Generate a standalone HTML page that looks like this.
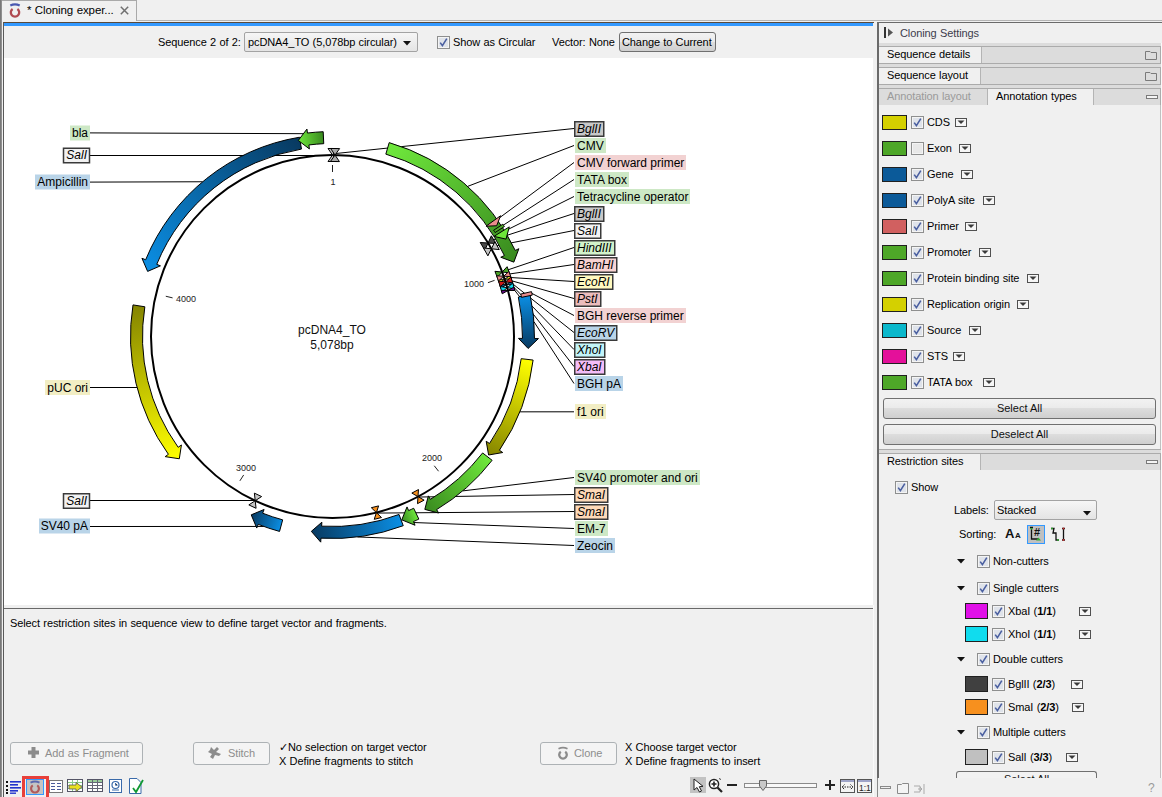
<!DOCTYPE html><html><head><meta charset="utf-8"><style>
html,body{margin:0;padding:0;width:1162px;height:797px;overflow:hidden;background:#f0f0f0}
.t{position:absolute;font-family:"Liberation Sans",sans-serif;font-size:11px;line-height:13px;color:#000;white-space:nowrap;letter-spacing:-0.1px;word-spacing:0.4px}
.tt{font-family:"Liberation Sans",sans-serif;font-size:11px;line-height:13px;color:#111;white-space:nowrap}
svg text{font-family:"Liberation Sans",sans-serif}
div>svg{display:block}
svg{overflow:visible}
</style></head><body>
<div style="position:absolute;left:0px;top:0px;width:1162px;height:797px;background:#f0f0f0"></div>
<div style="position:absolute;left:0px;top:0px;width:2px;height:797px;background:linear-gradient(90deg,#6e6e6e,#9a9a9a)"></div>
<div style="position:absolute;left:137px;top:20px;width:1025px;height:1px;background:#b4b4b4"></div>
<div style="position:absolute;left:2px;top:0px;width:135px;height:21px;background:#f0f0f0;border-top:1px solid #a9a9a9;border-right:1px solid #a9a9a9;box-sizing:border-box"></div>
<svg style="position:absolute;left:0px;top:0px" width="25" height="20"><path d="M10.3 5.6 Q15 3.2 19.7 5.6" stroke="#4a58b0" stroke-width="2.2" fill="none"/><path d="M17.41 8.96 A4.2 4.2 0 1 1 12.59 8.96" stroke="#b04a50" stroke-width="2.3" fill="none"/></svg>
<div class="t" style="left:27px;top:4px;font-size:11.5px">* Cloning exper...</div>
<svg style="position:absolute;left:120px;top:6px" width="9" height="9" viewBox="0 0 9 9"><path d="M0.8 0.8 L8.2 8.2 M8.2 0.8 L0.8 8.2" stroke="#707070" stroke-width="1.5"/></svg>
<div style="position:absolute;left:3px;top:22px;width:871px;height:775px;background:#f0f0f0;border-left:1px solid #5a5a5a;border-top:1px solid #5a4a3a;box-sizing:border-box"></div>
<div style="position:absolute;left:4px;top:23px;width:869px;height:3px;background:#3399ff"></div>
<div class="t" style="left:158px;top:36px;">Sequence 2 of 2:</div>
<div style="position:absolute;left:244px;top:32px;width:174px;height:20px;box-sizing:border-box;border:1px solid #a3a3a3;background:linear-gradient(#f6f6f6,#e4e4e4);border-radius:2px"></div>
<div class="t" style="left:248px;top:36px;">pcDNA4_TO (5,078bp circular)</div>
<svg style="position:absolute;left:403px;top:41px" width="8" height="5"><path d="M0 0 L8 0 L4 4.5Z" fill="#111"/></svg>
<div style="position:absolute;left:437px;top:36px"><svg width="13" height="13" viewBox="0 0 13 13"><rect x="0.5" y="0.5" width="12" height="12" fill="#f4f4f4" stroke="#8e8f8f"/><rect x="2" y="2" width="9" height="9" fill="#dfe3ea"/><path d="M3.2 6.6 L5.4 9.6 L9.8 2.6" fill="none" stroke="#4a5fa0" stroke-width="1.6"/></svg></div>
<div class="t" style="left:453px;top:36px;">Show as Circular</div>
<div class="t" style="left:552px;top:36px;">Vector: None</div>
<div style="position:absolute;left:619px;top:32px;width:97px;height:20px;box-sizing:border-box;border:1px solid #707070;background:linear-gradient(#f2f2f2 0,#ebebeb 50%,#dddddd 51%,#cfcfcf 100%);border-radius:3px"></div>
<div class="t" style="left:622px;top:36px;">Change to Current</div>
<div style="position:absolute;left:4px;top:58px;width:869px;height:547px;background:#ffffff"></div>
<svg style="position:absolute;left:0;top:0" width="874" height="605" viewBox="0 0 874 605"><defs><linearGradient id="g1" gradientUnits="userSpaceOnUse" x1="387.5" y1="148.4" x2="513.8" y2="262.1"><stop offset="0" stop-color="#6fe83c"/><stop offset="1" stop-color="#398a1f"/></linearGradient><linearGradient id="g2" gradientUnits="userSpaceOnUse" x1="147.6" y1="271.4" x2="300.5" y2="143.1"><stop offset="0" stop-color="#0b8ee3"/><stop offset="1" stop-color="#083a61"/></linearGradient><linearGradient id="g3" gradientUnits="userSpaceOnUse" x1="298.3" y1="140.5" x2="323.5" y2="137.7"><stop offset="0" stop-color="#6fe83c"/><stop offset="1" stop-color="#398a1f"/></linearGradient><linearGradient id="g4" gradientUnits="userSpaceOnUse" x1="179.3" y1="458.8" x2="138.9" y2="305.8"><stop offset="0" stop-color="#ffff00"/><stop offset="1" stop-color="#858500"/></linearGradient><linearGradient id="g5" gradientUnits="userSpaceOnUse" x1="524.2" y1="295.7" x2="528.1" y2="348.5"><stop offset="0" stop-color="#0b8ee3"/><stop offset="1" stop-color="#083a61"/></linearGradient><linearGradient id="g6" gradientUnits="userSpaceOnUse" x1="527.2" y1="359.4" x2="488.6" y2="455.0"><stop offset="0" stop-color="#ffff00"/><stop offset="1" stop-color="#858500"/></linearGradient><linearGradient id="g7" gradientUnits="userSpaceOnUse" x1="487.4" y1="456.6" x2="424.8" y2="509.4"><stop offset="0" stop-color="#6fe83c"/><stop offset="1" stop-color="#398a1f"/></linearGradient><linearGradient id="g8" gradientUnits="userSpaceOnUse" x1="401.1" y1="520.1" x2="311.3" y2="531.4"><stop offset="0" stop-color="#0b8ee3"/><stop offset="1" stop-color="#083a61"/></linearGradient><linearGradient id="g9" gradientUnits="userSpaceOnUse" x1="416.3" y1="513.7" x2="401.8" y2="519.8"><stop offset="0" stop-color="#6fe83c"/><stop offset="1" stop-color="#398a1f"/></linearGradient><linearGradient id="g10" gradientUnits="userSpaceOnUse" x1="281.1" y1="525.6" x2="251.2" y2="514.9"><stop offset="0" stop-color="#0b8ee3"/><stop offset="1" stop-color="#083a61"/></linearGradient></defs><circle cx="332.5" cy="336.5" r="181.5" fill="none" stroke="#000" stroke-width="2"/><line x1="332.50" y1="172.00" x2="332.50" y2="165.00" stroke="#222" stroke-width="1"/><line x1="487.94" y1="282.66" x2="494.55" y2="280.37" stroke="#222" stroke-width="1"/><line x1="434.26" y1="465.75" x2="438.59" y2="471.25" stroke="#222" stroke-width="1"/><line x1="243.67" y1="474.96" x2="239.89" y2="480.85" stroke="#222" stroke-width="1"/><line x1="172.60" y1="297.89" x2="165.79" y2="296.24" stroke="#222" stroke-width="1"/><g font-size="9" fill="#222"><text x="333" y="185" text-anchor="middle">1</text><text x="484" y="287" text-anchor="end">1000</text><text x="432" y="460.5" text-anchor="middle">2000</text><text x="246" y="470.5" text-anchor="middle">3000</text><text x="176" y="301.5">4000</text></g><g font-size="12" fill="#111" text-anchor="middle"><text x="332" y="333.5">pcDNA4_TO</text><text x="332" y="348.5">5,078bp</text></g><line x1="574.00" y1="128.50" x2="335.69" y2="153.53" stroke="#000" stroke-width="1"/><line x1="574.00" y1="145.50" x2="467.66" y2="186.38" stroke="#000" stroke-width="1"/><line x1="574.00" y1="162.50" x2="498.79" y2="218.33" stroke="#000" stroke-width="1"/><line x1="574.00" y1="179.50" x2="502.56" y2="225.64" stroke="#000" stroke-width="1"/><line x1="574.00" y1="196.50" x2="507.48" y2="229.69" stroke="#000" stroke-width="1"/><line x1="574.00" y1="213.50" x2="493.65" y2="239.67" stroke="#000" stroke-width="1"/><line x1="574.00" y1="230.50" x2="497.09" y2="245.64" stroke="#000" stroke-width="1"/><line x1="574.00" y1="247.50" x2="507.31" y2="270.09" stroke="#000" stroke-width="1"/><line x1="574.00" y1="264.50" x2="508.77" y2="274.08" stroke="#000" stroke-width="1"/><line x1="574.00" y1="281.50" x2="509.94" y2="277.47" stroke="#000" stroke-width="1"/><line x1="574.00" y1="298.50" x2="510.94" y2="280.58" stroke="#000" stroke-width="1"/><line x1="574.00" y1="315.50" x2="531.89" y2="293.39" stroke="#000" stroke-width="1"/><line x1="574.00" y1="332.50" x2="511.71" y2="283.08" stroke="#000" stroke-width="1"/><line x1="574.00" y1="349.50" x2="512.52" y2="285.90" stroke="#000" stroke-width="1"/><line x1="574.00" y1="366.50" x2="513.21" y2="288.42" stroke="#000" stroke-width="1"/><line x1="574.00" y1="383.50" x2="533.96" y2="321.71" stroke="#000" stroke-width="1"/><line x1="574.00" y1="411.80" x2="519.92" y2="411.84" stroke="#000" stroke-width="1"/><line x1="574.00" y1="477.50" x2="462.75" y2="490.90" stroke="#000" stroke-width="1"/><line x1="574.00" y1="494.50" x2="418.22" y2="497.05" stroke="#000" stroke-width="1"/><line x1="574.00" y1="511.50" x2="376.53" y2="513.09" stroke="#000" stroke-width="1"/><line x1="574.00" y1="528.50" x2="411.43" y2="522.44" stroke="#000" stroke-width="1"/><line x1="574.00" y1="545.50" x2="357.47" y2="536.95" stroke="#000" stroke-width="1"/><line x1="90.00" y1="132.90" x2="310.29" y2="133.71" stroke="#000" stroke-width="1"/><line x1="90.00" y1="155.50" x2="333.00" y2="155.50" stroke="#000" stroke-width="1"/><line x1="90.00" y1="182.10" x2="202.66" y2="181.76" stroke="#000" stroke-width="1"/><line x1="90.00" y1="387.50" x2="137.20" y2="387.50" stroke="#000" stroke-width="1"/><line x1="90.00" y1="500.50" x2="255.50" y2="500.50" stroke="#000" stroke-width="1"/><line x1="90.00" y1="526.50" x2="263.74" y2="526.44" stroke="#000" stroke-width="1"/><path d="M389.19 142.62 A202 202 0 0 1 515.24 250.42 L518.86 248.71 L513.84 262.13 L500.77 257.24 L504.38 255.53 A190 190 0 0 0 385.83 154.14 Z" fill="url(#g1)" stroke="#000" stroke-width="1" stroke-linejoin="miter"/><path d="M299.51 137.21 A202 202 0 0 0 145.64 259.77 L141.94 258.25 L147.63 271.40 L160.44 265.85 L156.74 264.33 A190 190 0 0 1 301.47 149.05 Z" fill="url(#g2)" stroke="#000" stroke-width="1" stroke-linejoin="miter"/><path d="M323.20 131.71 A205 205 0 0 0 307.44 133.04 L306.95 129.07 L298.29 140.46 L309.40 148.92 L308.91 144.95 A193 193 0 0 1 323.74 143.70 Z" fill="url(#g3)" stroke="#000" stroke-width="1" stroke-linejoin="miter"/><path d="M132.99 304.90 A202 202 0 0 0 168.41 454.31 L165.16 456.64 L179.32 458.78 L181.41 444.98 L178.16 447.31 A190 190 0 0 1 144.84 306.78 Z" fill="url(#g4)" stroke="#000" stroke-width="1" stroke-linejoin="miter"/><path d="M530.09 294.50 A202 202 0 0 1 534.49 338.53 L538.49 338.57 L528.13 348.47 L518.49 338.37 L522.49 338.41 A190 190 0 0 0 518.35 297.00 Z" fill="url(#g5)" stroke="#000" stroke-width="1" stroke-linejoin="miter"/><path d="M533.12 360.07 A202 202 0 0 1 499.42 450.26 L502.72 452.52 L488.62 455.00 L486.20 441.25 L489.50 443.51 A190 190 0 0 0 521.20 358.67 Z" fill="url(#g6)" stroke="#000" stroke-width="1" stroke-linejoin="miter"/><path d="M492.11 460.31 A202 202 0 0 1 436.61 509.61 L438.67 513.03 L424.82 509.40 L428.36 495.89 L430.42 499.32 A190 190 0 0 0 482.63 452.95 Z" fill="url(#g7)" stroke="#000" stroke-width="1" stroke-linejoin="miter"/><path d="M403.24 525.71 A202 202 0 0 1 320.95 538.17 L320.73 542.16 L311.33 531.35 L321.87 522.20 L321.64 526.19 A190 190 0 0 0 399.04 514.47 Z" fill="url(#g8)" stroke="#000" stroke-width="1" stroke-linejoin="miter"/><path d="M418.83 519.12 A202 202 0 0 1 413.45 521.57 L415.05 525.24 L401.78 519.85 L407.03 506.91 L408.64 510.58 A190 190 0 0 0 413.70 508.28 Z" fill="url(#g9)" stroke="#000" stroke-width="1" stroke-linejoin="miter"/><path d="M279.54 531.43 A202 202 0 0 1 258.22 524.35 L256.74 528.06 L251.22 514.85 L264.10 509.47 L262.63 513.19 A190 190 0 0 0 282.68 519.85 Z" fill="url(#g10)" stroke="#000" stroke-width="1" stroke-linejoin="miter"/><path d="M500.60 215.71 L496.65 225.78 L485.98 226.21Z" fill="#ea8c8c" stroke="#000" stroke-width="1"/><path d="M502.81 224.20 A204 204 0 0 1 504.36 226.59 L495.09 232.52 A193 193 0 0 0 493.63 230.26 Z" fill="#4ea728" stroke="#000" stroke-width="1" stroke-linejoin="miter"/><path d="M509.28 226.89 L506.04 239.11 L493.98 236.38Z" fill="#6ee53a" stroke="#000" stroke-width="1"/><path d="M531.51 291.65 A204 204 0 0 1 532.26 295.13 L521.49 297.36 A193 193 0 0 0 520.78 294.07 Z" fill="#e88c8c" stroke="#000" stroke-width="1" stroke-linejoin="miter"/><path d="M332.50 155.00 L337.00 148.50 L328.00 148.50Z M332.50 155.00 L337.00 161.50 L328.00 161.50Z" fill="#c4c4c4" stroke="#000" stroke-width="1" stroke-linejoin="miter"/><path d="M335.03 155.02 L339.62 148.58 L330.63 148.46Z M335.03 155.02 L339.44 161.58 L330.44 161.45Z" fill="#a8a8a8" stroke="#000" stroke-width="1" stroke-linejoin="miter"/><path d="M488.08 243.02 L495.97 243.53 L491.33 235.82Z M488.08 243.02 L484.82 250.23 L480.19 242.51Z" fill="#4a4a4a" stroke="#000" stroke-width="1" stroke-linejoin="miter"/><path d="M491.40 248.78 L499.26 249.58 L494.91 241.70Z M491.40 248.78 L487.88 255.87 L483.53 247.99Z" fill="#c4c4c4" stroke="#000" stroke-width="1" stroke-linejoin="miter"/><path d="M504.72 279.21 L511.52 279.06 L510.26 275.26Z M504.72 279.21 L499.18 283.16 L497.92 279.36Z" fill="#e8d820" stroke="#000" stroke-width="1" stroke-linejoin="miter"/><path d="M506.44 284.65 L513.24 284.71 L512.09 280.87Z M506.44 284.65 L500.78 288.42 L499.64 284.59Z" fill="#1060a0" stroke="#000" stroke-width="1" stroke-linejoin="miter"/><path d="M502.17 272.05 L509.40 272.78 L507.09 266.70Z M502.17 272.05 L497.25 277.39 L494.94 271.32Z" fill="#4ea728" stroke="#000" stroke-width="1" stroke-linejoin="miter"/><path d="M503.69 276.21 L510.74 276.65 L508.91 271.46Z M503.69 276.21 L498.48 280.97 L496.65 275.78Z" fill="#ee8a8a" stroke="#000" stroke-width="1" stroke-linejoin="miter"/><path d="M505.60 281.92 L512.70 282.83 L510.90 277.11Z M505.60 281.92 L500.30 286.74 L498.50 281.02Z" fill="#d01818" stroke="#000" stroke-width="1" stroke-linejoin="miter"/><path d="M507.31 287.69 L514.38 288.83 L512.77 283.05Z M507.31 287.69 L501.86 292.33 L500.25 286.55Z" fill="#10d8f0" stroke="#000" stroke-width="1" stroke-linejoin="miter"/><path d="M508.06 290.44 L514.79 290.49 L513.90 287.10Z M508.06 290.44 L502.22 293.79 L501.33 290.40Z" fill="#6a0a8a" stroke="#000" stroke-width="1" stroke-linejoin="miter"/><path d="M417.99 496.61 L417.51 503.67 L424.12 500.13Z M417.99 496.61 L411.85 493.08 L418.47 489.55Z" fill="#f7901e" stroke="#000" stroke-width="1" stroke-linejoin="miter"/><path d="M376.41 512.61 L374.22 519.34 L381.50 517.52Z M376.41 512.61 L371.32 507.69 L378.60 505.88Z" fill="#f7901e" stroke="#000" stroke-width="1" stroke-linejoin="miter"/><path d="M255.22 500.73 L248.83 504.90 L256.07 508.31Z M255.22 500.73 L254.37 493.14 L261.61 496.55Z" fill="#c4c4c4" stroke="#000" stroke-width="1" stroke-linejoin="miter"/><g font-size="12" fill="#000"><rect x="574.75" y="121.75" width="29" height="14.5" fill="#c8c8c8" stroke="#3a3a3a" stroke-width="1.5"/><text x="577" y="132.5" font-style="italic">BglII</text><rect x="575" y="138" width="31" height="15" fill="#cde8c5"/><text x="577" y="149.5">CMV</text><rect x="575" y="155" width="111" height="15" fill="#f2d2d2"/><text x="577" y="166.5">CMV forward primer</text><rect x="575" y="172" width="54" height="15" fill="#cde8c5"/><text x="577" y="183.5">TATA box</text><rect x="575" y="189" width="115" height="15" fill="#cde8c5"/><text x="577" y="200.5">Tetracycline operator</text><rect x="574.75" y="206.75" width="29" height="14.5" fill="#c8c8c8" stroke="#3a3a3a" stroke-width="1.5"/><text x="577" y="217.5" font-style="italic">BglII</text><rect x="574.75" y="223.75" width="26" height="14.5" fill="#f2f2f2" stroke="#3a3a3a" stroke-width="1.5"/><text x="577" y="234.5" font-style="italic">SalI</text><rect x="574.75" y="240.75" width="40" height="14.5" fill="#d2f2ca" stroke="#3a3a3a" stroke-width="1.5"/><text x="577" y="251.5" font-style="italic">HindIII</text><rect x="574.75" y="257.75" width="42" height="14.5" fill="#f8d2d2" stroke="#3a3a3a" stroke-width="1.5"/><text x="577" y="268.5" font-style="italic">BamHI</text><rect x="574.75" y="274.75" width="38" height="14.5" fill="#fffac0" stroke="#3a3a3a" stroke-width="1.5"/><text x="577" y="285.5" font-style="italic">EcoRI</text><rect x="574.75" y="291.75" width="26" height="14.5" fill="#ecbcbc" stroke="#3a3a3a" stroke-width="1.5"/><text x="577" y="302.5" font-style="italic">PstI</text><rect x="575" y="308" width="111" height="15" fill="#f2d2d2"/><text x="577" y="319.5">BGH reverse primer</text><rect x="574.75" y="325.75" width="42" height="14.5" fill="#b9d4e8" stroke="#3a3a3a" stroke-width="1.5"/><text x="577" y="336.5" font-style="italic">EcoRV</text><rect x="574.75" y="342.75" width="30" height="14.5" fill="#c2f4f8" stroke="#3a3a3a" stroke-width="1.5"/><text x="577" y="353.5" font-style="italic">XhoI</text><rect x="574.75" y="359.75" width="30" height="14.5" fill="#f4bcf8" stroke="#3a3a3a" stroke-width="1.5"/><text x="577" y="370.5" font-style="italic">XbaI</text><rect x="575" y="376" width="48" height="15" fill="#b9d4e8"/><text x="577" y="387.5">BGH pA</text><rect x="575" y="404" width="31" height="15" fill="#f2eec4"/><text x="577" y="415.5">f1 ori</text><rect x="575" y="470" width="125" height="15" fill="#cde8c5"/><text x="577" y="481.5">SV40 promoter and ori</text><rect x="574.75" y="487.75" width="33" height="14.5" fill="#fdd9b8" stroke="#3a3a3a" stroke-width="1.5"/><text x="577" y="498.5" font-style="italic">SmaI</text><rect x="574.75" y="504.75" width="33" height="14.5" fill="#fdd9b8" stroke="#3a3a3a" stroke-width="1.5"/><text x="577" y="515.5" font-style="italic">SmaI</text><rect x="575" y="521" width="33" height="15" fill="#cde8c5"/><text x="577" y="532.5">EM-7</text><rect x="575" y="538" width="40" height="15" fill="#b9d4e8"/><text x="577" y="549.5">Zeocin</text><rect x="70" y="125.5" width="20" height="15" fill="#cde8c5"/><text x="88" y="137.0" text-anchor="end">bla</text><rect x="63.5" y="148.25" width="26" height="14.5" fill="#f2f2f2" stroke="#3a3a3a" stroke-width="1.5"/><text x="87" y="159.0" text-anchor="end" font-style="italic">SalI</text><rect x="35" y="174.5" width="55" height="15" fill="#b9d4e8"/><text x="88" y="186.0" text-anchor="end">Ampicillin</text><rect x="45" y="380" width="45" height="15" fill="#f2eec4"/><text x="88" y="391.5" text-anchor="end">pUC ori</text><rect x="63.5" y="493.75" width="26" height="14.5" fill="#f2f2f2" stroke="#3a3a3a" stroke-width="1.5"/><text x="87" y="504.5" text-anchor="end" font-style="italic">SalI</text><rect x="39" y="518.5" width="51" height="15" fill="#b9d4e8"/><text x="88" y="530.0" text-anchor="end">SV40 pA</text></g></svg>
<div style="position:absolute;left:4px;top:605px;width:869px;height:3px;background:#f0f0f0"></div>
<div style="position:absolute;left:4px;top:608px;width:869px;height:1px;background:#696969"></div>
<div class="t" style="left:10px;top:617px;">Select restriction sites in sequence view to define target vector and fragments.</div>
<div style="position:absolute;left:10px;top:742px;width:133px;height:23px;box-sizing:border-box;border:1px solid #adb2b5;background:#f4f4f4;border-radius:3px"></div>
<svg style="position:absolute;left:28px;top:747px" width="11" height="11"><path d="M3.5 0 H7.5 V3.5 H11 V7.5 H7.5 V11 H3.5 V7.5 H0 V3.5 H3.5Z" fill="#8c8c8c"/></svg>
<div class="t" style="left:45px;top:747px;color:#8d8d8d">Add as Fragment</div>
<div style="position:absolute;left:193px;top:742px;width:77px;height:23px;box-sizing:border-box;border:1px solid #adb2b5;background:#f4f4f4;border-radius:3px"></div>
<svg style="position:absolute;left:207px;top:746px" width="16" height="14"><path d="M4 1 L7 4 L10 1 L12 3 L9 6 L14 8 L12 10 L8 9 L6 13 L3 11 L5 8 L1 6 L3 4Z" fill="#8c8c8c"/></svg>
<div class="t" style="left:228px;top:747px;color:#8d8d8d">Stitch</div>
<div class="t" style="left:279px;top:741px;">&#10003;No selection on target vector</div>
<div class="t" style="left:279px;top:755px;">X&nbsp;Define fragments to stitch</div>
<div style="position:absolute;left:540px;top:742px;width:77px;height:23px;box-sizing:border-box;border:1px solid #adb2b5;background:#f4f4f4;border-radius:3px"></div>
<svg style="position:absolute;left:555px;top:745px" width="16" height="16"><path d="M3.5 3.8 Q8 1.6 12.5 3.8" stroke="#8c8c8c" stroke-width="1.7" fill="none"/><path d="M10.18 6.69 A3.8 3.8 0 1 1 5.82 6.69" stroke="#8c8c8c" stroke-width="2.3" fill="none"/></svg>
<div class="t" style="left:574px;top:747px;color:#8d8d8d">Clone</div>
<div class="t" style="left:625px;top:741px;">X&nbsp;Choose target vector</div>
<div class="t" style="left:625px;top:755px;">X&nbsp;Define fragments to insert</div>
<div style="position:absolute;left:22px;top:776px;width:27px;height:24px;box-sizing:border-box;border:3px solid #e8403a"></div>
<div style="position:absolute;left:26px;top:779px;width:18px;height:16px;box-sizing:border-box;border:1px solid #3399ff;background:#c4c4c4"></div>
<svg style="position:absolute;left:6px;top:780px" width="16" height="14"><g fill="#111"><rect x="0" y="1" width="2" height="2"/><rect x="0" y="5" width="2" height="2"/><rect x="0" y="9" width="2" height="2"/><rect x="0" y="12" width="2" height="2"/></g><g fill="#2233cc"><rect x="4" y="1" width="11" height="1.6"/><rect x="4" y="4" width="8" height="1.6"/><rect x="4" y="7" width="11" height="1.6"/><rect x="4" y="10" width="8" height="1.6"/><rect x="4" y="12.5" width="6" height="1.4"/></g></svg>
<svg style="position:absolute;left:26px;top:779px" width="18" height="16"><path d="M4.5 3.6 Q9 1.4 13.5 3.6" stroke="#5a68b0" stroke-width="1.8" fill="none"/><path d="M11.24 6.41 A3.9 3.9 0 1 1 6.76 6.41" stroke="#b05a5a" stroke-width="2.2" fill="none"/></svg>
<svg style="position:absolute;left:49px;top:780px" width="14" height="13"><rect x="0.5" y="0.5" width="13" height="12" fill="#fff" stroke="#777"/><g stroke="#4a5a9a"><path d="M2 3.5H6M8 3.5H12M2 6.5H6M8 6.5H12M2 9.5H6M8 9.5H12"/></g></svg>
<svg style="position:absolute;left:67px;top:779px" width="17" height="15"><rect x="0.5" y="0.5" width="15" height="12" fill="#fff" stroke="#556"/><path d="M1 3.5H15M1 6.5H15M1 9.5H15M5.5 1V12M10.5 1V12" stroke="#8c8"/><path d="M2 6 H9 V3.5 L15 8 L9 12.5 V10 H2Z" fill="#e8e020" stroke="#555" stroke-width="0.8"/></svg>
<svg style="position:absolute;left:87px;top:779px" width="17" height="14"><rect x="0.5" y="0.5" width="15" height="12" fill="#fff" stroke="#556"/><rect x="1" y="1" width="14" height="2.5" fill="#9c9"/><path d="M1 3.5H15M1 6.5H15M1 9.5H15M5.5 1V12M10.5 1V12" stroke="#667"/></svg>
<svg style="position:absolute;left:109px;top:779px" width="13" height="14"><rect x="0.5" y="0.5" width="12" height="13" fill="#fff" stroke="#3a6aaa"/><circle cx="6.5" cy="6" r="3.5" fill="none" stroke="#3a6aaa" stroke-width="1.2"/><path d="M6.5 4V6.2H8.5M3 11H10" stroke="#3a6aaa"/></svg>
<svg style="position:absolute;left:129px;top:778px" width="15" height="16"><path d="M0.5 0.5H8L12 4.5V15.5H0.5Z" fill="#fff" stroke="#3a6aaa"/><path d="M4 10 L7 14 L14 2" fill="none" stroke="#119933" stroke-width="1.8"/></svg>
<div style="position:absolute;left:690px;top:777px;width:16px;height:16px;background:#c2c2c2"></div>
<svg style="position:absolute;left:693px;top:778px" width="12" height="15"><path d="M1 1 L1 12 L4 9.5 L6.5 14 L8.5 13 L6.3 8.7 L10 8.3Z" fill="#fff" stroke="#222" stroke-width="1"/></svg>
<svg style="position:absolute;left:708px;top:777px" width="16" height="16"><circle cx="6" cy="7" r="4.6" fill="#fff" stroke="#222" stroke-width="1.5"/><path d="M6 4.5V9.5M3.5 7H8.5" stroke="#222" stroke-width="1.6"/><path d="M9.5 10.5 L14 15" stroke="#222" stroke-width="2.2"/><path d="M11 1.5 L13 2.5" stroke="#444"/></svg>
<div style="position:absolute;left:727px;top:784px;width:10px;height:2px;background:#222"></div>
<div style="position:absolute;left:744px;top:783px;width:73px;height:5px;box-sizing:border-box;border:1px solid #8a8a8a;background:#f8f8f8"></div>
<svg style="position:absolute;left:759px;top:780px" width="8" height="11"><path d="M0.5 0.5H7.5V6L4 10.5L0.5 6Z" fill="#c8c8c8" stroke="#666"/></svg>
<div style="position:absolute;left:825px;top:784px;width:10px;height:2px;background:#222"></div>
<div style="position:absolute;left:829px;top:780px;width:2px;height:10px;background:#222"></div>
<svg style="position:absolute;left:840px;top:779px" width="16" height="14"><rect x="0.5" y="0.5" width="14" height="13" fill="#f4f4f4" stroke="#555"/><rect x="1" y="1" width="13" height="2" fill="#9ea4c8"/><path d="M2 8H13M4.5 5.5L2 8L4.5 10.5M10.5 5.5L13 8L10.5 10.5" stroke="#222" fill="none" stroke-dasharray="1.5 1"/></svg>
<svg style="position:absolute;left:857px;top:779px" width="16" height="14"><rect x="0.5" y="0.5" width="14" height="13" fill="#f4f4f4" stroke="#555"/><rect x="1" y="1" width="13" height="2" fill="#9ea4c8"/><text x="2" y="12" font-family="Liberation Sans" font-size="8.5" fill="#222">1:1</text></svg>
<div style="position:absolute;left:877px;top:22px;width:285px;height:756px;box-sizing:border-box;border-left:2px solid #6a6a6a;border-top:1px solid #6a6a6a;background:#f0f0f0"></div>
<div style="position:absolute;left:1160px;top:43px;width:1px;height:735px;background:#c0c0c0"></div>
<div style="position:absolute;left:1161px;top:43px;width:1px;height:735px;background:#fafafa"></div>
<svg style="position:absolute;left:884px;top:27px" width="10" height="12"><rect x="0" y="0" width="2" height="11" fill="#333"/><path d="M4 1.5 L9 5.5 L4 9.5Z" fill="#555"/></svg>
<div class="t" style="left:900px;top:27px;color:#3c3c4c">Cloning Settings</div>
<div style="position:absolute;left:879px;top:43px;width:282px;height:3px;background:#dcdcdc"></div>
<div style="position:absolute;left:879px;top:46px;width:282px;height:18px;background:#dcdcdc;border-top:1px solid #ababab;border-right:1px solid #ababab;border-bottom:1px solid #ababab;box-sizing:border-box"></div><div style="position:absolute;left:879px;top:47px;width:103px;height:16px;background:#f0f0f0;border-right:1px solid #b4b4b4;box-sizing:border-box"></div><div class="t" style="left:887px;top:48px;">Sequence details</div><svg style="position:absolute;left:1145px;top:50px" width="12" height="11"><path d="M0.5 1.5H5L6 2.5H11.5V9.5H0.5Z" fill="none" stroke="#7a7a7a"/></svg>
<div style="position:absolute;left:879px;top:64px;width:282px;height:3px;background:#dcdcdc"></div>
<div style="position:absolute;left:879px;top:67px;width:282px;height:18px;background:#dcdcdc;border-top:1px solid #ababab;border-right:1px solid #ababab;border-bottom:1px solid #ababab;box-sizing:border-box"></div><div style="position:absolute;left:879px;top:68px;width:102px;height:16px;background:#f0f0f0;border-right:1px solid #b4b4b4;box-sizing:border-box"></div><div class="t" style="left:887px;top:69px;">Sequence layout</div><svg style="position:absolute;left:1145px;top:71px" width="12" height="11"><path d="M0.5 1.5H5L6 2.5H11.5V9.5H0.5Z" fill="none" stroke="#7a7a7a"/></svg>
<div style="position:absolute;left:879px;top:85px;width:282px;height:3px;background:#dcdcdc"></div>
<div style="position:absolute;left:879px;top:88px;width:282px;height:17px;background:#dcdcdc;border-top:1px solid #ababab;border-right:1px solid #ababab;box-sizing:border-box"></div><div style="position:absolute;left:879px;top:89px;width:109px;height:16px;background:#dcdcdc;border-right:1px solid #b4b4b4;box-sizing:border-box"></div><div class="t" style="left:887px;top:90px;color:#9a9a9a">Annotation layout</div><div style="position:absolute;left:988px;top:89px;width:106px;height:16px;background:#f0f0f0;border-right:1px solid #b4b4b4;box-sizing:border-box"></div><div class="t" style="left:996px;top:90px;">Annotation types</div><svg style="position:absolute;left:1146px;top:95px" width="12" height="4"><rect x="0.5" y="0.5" width="11" height="3" fill="#f4f4f4" stroke="#7a7a7a"/></svg>
<div style="position:absolute;left:882px;top:115px;width:25px;height:15px;box-sizing:border-box;border:1px solid #202020;background:#d4d000"></div>
<div style="position:absolute;left:911px;top:116px;height:13px"><svg width="13" height="13" viewBox="0 0 13 13"><rect x="0.5" y="0.5" width="12" height="12" fill="#f4f4f4" stroke="#8e8f8f"/><rect x="2" y="2" width="9" height="9" fill="#dfe3ea"/><path d="M3.2 6.6 L5.4 9.6 L9.8 2.6" fill="none" stroke="#4a5fa0" stroke-width="1.6"/></svg></div>
<div class="t" style="left:927px;top:116px">CDS</div>
<div style="position:absolute;left:955px;top:118px"><svg width="12" height="9" viewBox="0 0 12 9"><rect x="0.5" y="0.5" width="11" height="8" fill="#f6f6f6" stroke="#505050"/><path d="M2.5 2.5 L9.5 2.5 L6 6Z" fill="#3a3a3a"/></svg></div>
<div style="position:absolute;left:882px;top:141px;width:25px;height:15px;box-sizing:border-box;border:1px solid #202020;background:#4ea728"></div>
<div style="position:absolute;left:911px;top:142px;height:13px"><svg width="13" height="13" viewBox="0 0 13 13"><rect x="0.5" y="0.5" width="12" height="12" fill="#f4f4f4" stroke="#8e8f8f"/><rect x="2" y="2" width="9" height="9" fill="#e8e8e8"/></svg></div>
<div class="t" style="left:927px;top:142px">Exon</div>
<div style="position:absolute;left:959px;top:144px"><svg width="12" height="9" viewBox="0 0 12 9"><rect x="0.5" y="0.5" width="11" height="8" fill="#f6f6f6" stroke="#505050"/><path d="M2.5 2.5 L9.5 2.5 L6 6Z" fill="#3a3a3a"/></svg></div>
<div style="position:absolute;left:882px;top:167px;width:25px;height:15px;box-sizing:border-box;border:1px solid #202020;background:#0b5a99"></div>
<div style="position:absolute;left:911px;top:168px;height:13px"><svg width="13" height="13" viewBox="0 0 13 13"><rect x="0.5" y="0.5" width="12" height="12" fill="#f4f4f4" stroke="#8e8f8f"/><rect x="2" y="2" width="9" height="9" fill="#dfe3ea"/><path d="M3.2 6.6 L5.4 9.6 L9.8 2.6" fill="none" stroke="#4a5fa0" stroke-width="1.6"/></svg></div>
<div class="t" style="left:927px;top:168px">Gene</div>
<div style="position:absolute;left:961px;top:170px"><svg width="12" height="9" viewBox="0 0 12 9"><rect x="0.5" y="0.5" width="11" height="8" fill="#f6f6f6" stroke="#505050"/><path d="M2.5 2.5 L9.5 2.5 L6 6Z" fill="#3a3a3a"/></svg></div>
<div style="position:absolute;left:882px;top:193px;width:25px;height:15px;box-sizing:border-box;border:1px solid #202020;background:#0b5a99"></div>
<div style="position:absolute;left:911px;top:194px;height:13px"><svg width="13" height="13" viewBox="0 0 13 13"><rect x="0.5" y="0.5" width="12" height="12" fill="#f4f4f4" stroke="#8e8f8f"/><rect x="2" y="2" width="9" height="9" fill="#dfe3ea"/><path d="M3.2 6.6 L5.4 9.6 L9.8 2.6" fill="none" stroke="#4a5fa0" stroke-width="1.6"/></svg></div>
<div class="t" style="left:927px;top:194px">PolyA site</div>
<div style="position:absolute;left:983px;top:196px"><svg width="12" height="9" viewBox="0 0 12 9"><rect x="0.5" y="0.5" width="11" height="8" fill="#f6f6f6" stroke="#505050"/><path d="M2.5 2.5 L9.5 2.5 L6 6Z" fill="#3a3a3a"/></svg></div>
<div style="position:absolute;left:882px;top:219px;width:25px;height:15px;box-sizing:border-box;border:1px solid #202020;background:#d16060"></div>
<div style="position:absolute;left:911px;top:220px;height:13px"><svg width="13" height="13" viewBox="0 0 13 13"><rect x="0.5" y="0.5" width="12" height="12" fill="#f4f4f4" stroke="#8e8f8f"/><rect x="2" y="2" width="9" height="9" fill="#dfe3ea"/><path d="M3.2 6.6 L5.4 9.6 L9.8 2.6" fill="none" stroke="#4a5fa0" stroke-width="1.6"/></svg></div>
<div class="t" style="left:927px;top:220px">Primer</div>
<div style="position:absolute;left:965px;top:222px"><svg width="12" height="9" viewBox="0 0 12 9"><rect x="0.5" y="0.5" width="11" height="8" fill="#f6f6f6" stroke="#505050"/><path d="M2.5 2.5 L9.5 2.5 L6 6Z" fill="#3a3a3a"/></svg></div>
<div style="position:absolute;left:882px;top:245px;width:25px;height:15px;box-sizing:border-box;border:1px solid #202020;background:#4ea728"></div>
<div style="position:absolute;left:911px;top:246px;height:13px"><svg width="13" height="13" viewBox="0 0 13 13"><rect x="0.5" y="0.5" width="12" height="12" fill="#f4f4f4" stroke="#8e8f8f"/><rect x="2" y="2" width="9" height="9" fill="#dfe3ea"/><path d="M3.2 6.6 L5.4 9.6 L9.8 2.6" fill="none" stroke="#4a5fa0" stroke-width="1.6"/></svg></div>
<div class="t" style="left:927px;top:246px">Promoter</div>
<div style="position:absolute;left:979px;top:248px"><svg width="12" height="9" viewBox="0 0 12 9"><rect x="0.5" y="0.5" width="11" height="8" fill="#f6f6f6" stroke="#505050"/><path d="M2.5 2.5 L9.5 2.5 L6 6Z" fill="#3a3a3a"/></svg></div>
<div style="position:absolute;left:882px;top:271px;width:25px;height:15px;box-sizing:border-box;border:1px solid #202020;background:#4ea728"></div>
<div style="position:absolute;left:911px;top:272px;height:13px"><svg width="13" height="13" viewBox="0 0 13 13"><rect x="0.5" y="0.5" width="12" height="12" fill="#f4f4f4" stroke="#8e8f8f"/><rect x="2" y="2" width="9" height="9" fill="#dfe3ea"/><path d="M3.2 6.6 L5.4 9.6 L9.8 2.6" fill="none" stroke="#4a5fa0" stroke-width="1.6"/></svg></div>
<div class="t" style="left:927px;top:272px">Protein binding site</div>
<div style="position:absolute;left:1027px;top:274px"><svg width="12" height="9" viewBox="0 0 12 9"><rect x="0.5" y="0.5" width="11" height="8" fill="#f6f6f6" stroke="#505050"/><path d="M2.5 2.5 L9.5 2.5 L6 6Z" fill="#3a3a3a"/></svg></div>
<div style="position:absolute;left:882px;top:297px;width:25px;height:15px;box-sizing:border-box;border:1px solid #202020;background:#d4d000"></div>
<div style="position:absolute;left:911px;top:298px;height:13px"><svg width="13" height="13" viewBox="0 0 13 13"><rect x="0.5" y="0.5" width="12" height="12" fill="#f4f4f4" stroke="#8e8f8f"/><rect x="2" y="2" width="9" height="9" fill="#dfe3ea"/><path d="M3.2 6.6 L5.4 9.6 L9.8 2.6" fill="none" stroke="#4a5fa0" stroke-width="1.6"/></svg></div>
<div class="t" style="left:927px;top:298px">Replication origin</div>
<div style="position:absolute;left:1017px;top:300px"><svg width="12" height="9" viewBox="0 0 12 9"><rect x="0.5" y="0.5" width="11" height="8" fill="#f6f6f6" stroke="#505050"/><path d="M2.5 2.5 L9.5 2.5 L6 6Z" fill="#3a3a3a"/></svg></div>
<div style="position:absolute;left:882px;top:323px;width:25px;height:15px;box-sizing:border-box;border:1px solid #202020;background:#0ab8cc"></div>
<div style="position:absolute;left:911px;top:324px;height:13px"><svg width="13" height="13" viewBox="0 0 13 13"><rect x="0.5" y="0.5" width="12" height="12" fill="#f4f4f4" stroke="#8e8f8f"/><rect x="2" y="2" width="9" height="9" fill="#dfe3ea"/><path d="M3.2 6.6 L5.4 9.6 L9.8 2.6" fill="none" stroke="#4a5fa0" stroke-width="1.6"/></svg></div>
<div class="t" style="left:927px;top:324px">Source</div>
<div style="position:absolute;left:969px;top:326px"><svg width="12" height="9" viewBox="0 0 12 9"><rect x="0.5" y="0.5" width="11" height="8" fill="#f6f6f6" stroke="#505050"/><path d="M2.5 2.5 L9.5 2.5 L6 6Z" fill="#3a3a3a"/></svg></div>
<div style="position:absolute;left:882px;top:349px;width:25px;height:15px;box-sizing:border-box;border:1px solid #202020;background:#e4109a"></div>
<div style="position:absolute;left:911px;top:350px;height:13px"><svg width="13" height="13" viewBox="0 0 13 13"><rect x="0.5" y="0.5" width="12" height="12" fill="#f4f4f4" stroke="#8e8f8f"/><rect x="2" y="2" width="9" height="9" fill="#dfe3ea"/><path d="M3.2 6.6 L5.4 9.6 L9.8 2.6" fill="none" stroke="#4a5fa0" stroke-width="1.6"/></svg></div>
<div class="t" style="left:927px;top:350px">STS</div>
<div style="position:absolute;left:953px;top:352px"><svg width="12" height="9" viewBox="0 0 12 9"><rect x="0.5" y="0.5" width="11" height="8" fill="#f6f6f6" stroke="#505050"/><path d="M2.5 2.5 L9.5 2.5 L6 6Z" fill="#3a3a3a"/></svg></div>
<div style="position:absolute;left:882px;top:375px;width:25px;height:15px;box-sizing:border-box;border:1px solid #202020;background:#4ea728"></div>
<div style="position:absolute;left:911px;top:376px;height:13px"><svg width="13" height="13" viewBox="0 0 13 13"><rect x="0.5" y="0.5" width="12" height="12" fill="#f4f4f4" stroke="#8e8f8f"/><rect x="2" y="2" width="9" height="9" fill="#dfe3ea"/><path d="M3.2 6.6 L5.4 9.6 L9.8 2.6" fill="none" stroke="#4a5fa0" stroke-width="1.6"/></svg></div>
<div class="t" style="left:927px;top:376px">TATA box</div>
<div style="position:absolute;left:983px;top:378px"><svg width="12" height="9" viewBox="0 0 12 9"><rect x="0.5" y="0.5" width="11" height="8" fill="#f6f6f6" stroke="#505050"/><path d="M2.5 2.5 L9.5 2.5 L6 6Z" fill="#3a3a3a"/></svg></div>
<div style="position:absolute;left:883px;top:398px;width:273px;height:21px;box-sizing:border-box;border:1px solid #707070;border-radius:3px;background:linear-gradient(#f2f2f2 0,#ebebeb 45%,#dddddd 50%,#cfcfcf 100%);text-align:center"><div style="position:relative;top:3px" class="tt">Select All</div></div>
<div style="position:absolute;left:883px;top:424px;width:273px;height:21px;box-sizing:border-box;border:1px solid #707070;border-radius:3px;background:linear-gradient(#f2f2f2 0,#ebebeb 45%,#dddddd 50%,#cfcfcf 100%);text-align:center"><div style="position:relative;top:3px" class="tt">Deselect All</div></div>
<div style="position:absolute;left:879px;top:449px;width:282px;height:4px;background:#dcdcdc;border-top:1px solid #ababab;box-sizing:border-box"></div>
<div style="position:absolute;left:879px;top:453px;width:282px;height:17px;background:#dcdcdc;border-top:1px solid #ababab;border-right:1px solid #ababab;box-sizing:border-box"></div><div style="position:absolute;left:879px;top:454px;width:102px;height:16px;background:#f0f0f0;border-right:1px solid #b4b4b4;box-sizing:border-box"></div><div class="t" style="left:887px;top:455px;">Restriction sites</div><svg style="position:absolute;left:1146px;top:460px" width="12" height="4"><rect x="0.5" y="0.5" width="11" height="3" fill="#f4f4f4" stroke="#7a7a7a"/></svg>
<div style="position:absolute;left:895px;top:481px"><svg width="13" height="13" viewBox="0 0 13 13"><rect x="0.5" y="0.5" width="12" height="12" fill="#f4f4f4" stroke="#8e8f8f"/><rect x="2" y="2" width="9" height="9" fill="#dfe3ea"/><path d="M3.2 6.6 L5.4 9.6 L9.8 2.6" fill="none" stroke="#4a5fa0" stroke-width="1.6"/></svg></div>
<div class="t" style="left:911px;top:481px;">Show</div>
<div class="t" style="left:954px;top:504px;">Labels:</div>
<div style="position:absolute;left:994px;top:500px;width:103px;height:20px;box-sizing:border-box;border:1px solid #a3a3a3;background:linear-gradient(#f6f6f6,#e4e4e4);border-radius:2px"></div>
<div class="t" style="left:997px;top:504px;">Stacked</div>
<svg style="position:absolute;left:1083px;top:511px" width="8" height="5"><path d="M0 0 L8 0 L4 4.5Z" fill="#111"/></svg>
<div class="t" style="left:959px;top:528px;">Sorting:</div>
<svg style="position:absolute;left:1005px;top:527px" width="18" height="13"><text x="0" y="11" font-family="Liberation Sans" font-weight="bold" font-size="13" fill="#111">A</text><text x="10" y="11" font-family="Liberation Sans" font-weight="bold" font-size="8" fill="#111">A</text></svg>
<div style="position:absolute;left:1027px;top:525px;width:18px;height:19px;box-sizing:border-box;border:1px solid #3399ff;background:#c0c0c0"></div>
<svg style="position:absolute;left:1028px;top:526px" width="16" height="17"><path d="M2 1.5H5M3.5 1.5V13H10" stroke="#111" stroke-width="1.3" fill="none"/><path d="M2 2 L5 2 L3.5 4Z" fill="#3a3"/><path d="M8 14.5 L10.5 11.5 L13 14.5Z" fill="#3a3"/><text x="6" y="10" font-family="Liberation Sans" font-weight="bold" font-size="11" fill="#111">#</text></svg>
<svg style="position:absolute;left:1050px;top:527px" width="17" height="15"><path d="M1 1.5H4L3 6H6V13H9M12 1.5H15M13.5 1.5V13M12 13H15" stroke="#111" stroke-width="1.3" fill="none"/><circle cx="2" cy="1.5" r="1" fill="#3a3"/><circle cx="8" cy="13" r="1" fill="#3a3"/><circle cx="13.5" cy="1.5" r="1" fill="#c33"/><circle cx="13.5" cy="13" r="1" fill="#c33"/></svg>
<div style="position:absolute;left:957px;top:559px"><svg width="8" height="5"><path d="M0 0 L8 0 L4 4.5Z" fill="#111"/></svg></div><div style="position:absolute;left:977px;top:555px"><svg width="13" height="13" viewBox="0 0 13 13"><rect x="0.5" y="0.5" width="12" height="12" fill="#f4f4f4" stroke="#8e8f8f"/><rect x="2" y="2" width="9" height="9" fill="#dfe3ea"/><path d="M3.2 6.6 L5.4 9.6 L9.8 2.6" fill="none" stroke="#4a5fa0" stroke-width="1.6"/></svg></div><div class="t" style="left:993px;top:555px;">Non-cutters</div>
<div style="position:absolute;left:957px;top:586px"><svg width="8" height="5"><path d="M0 0 L8 0 L4 4.5Z" fill="#111"/></svg></div><div style="position:absolute;left:977px;top:582px"><svg width="13" height="13" viewBox="0 0 13 13"><rect x="0.5" y="0.5" width="12" height="12" fill="#f4f4f4" stroke="#8e8f8f"/><rect x="2" y="2" width="9" height="9" fill="#dfe3ea"/><path d="M3.2 6.6 L5.4 9.6 L9.8 2.6" fill="none" stroke="#4a5fa0" stroke-width="1.6"/></svg></div><div class="t" style="left:993px;top:582px;">Single cutters</div>
<div style="position:absolute;left:965px;top:603px;width:23px;height:16px;box-sizing:border-box;border:1px solid #202020;background:#e010e8"></div><div style="position:absolute;left:992px;top:605px"><svg width="13" height="13" viewBox="0 0 13 13"><rect x="0.5" y="0.5" width="12" height="12" fill="#f4f4f4" stroke="#8e8f8f"/><rect x="2" y="2" width="9" height="9" fill="#dfe3ea"/><path d="M3.2 6.6 L5.4 9.6 L9.8 2.6" fill="none" stroke="#4a5fa0" stroke-width="1.6"/></svg></div><div class="t" style="left:1008px;top:605px;">XbaI (<b>1/1</b>)</div><div style="position:absolute;left:1079px;top:607px"><svg width="12" height="9" viewBox="0 0 12 9"><rect x="0.5" y="0.5" width="11" height="8" fill="#f6f6f6" stroke="#505050"/><path d="M2.5 2.5 L9.5 2.5 L6 6Z" fill="#3a3a3a"/></svg></div>
<div style="position:absolute;left:965px;top:626px;width:23px;height:16px;box-sizing:border-box;border:1px solid #202020;background:#10dcee"></div><div style="position:absolute;left:992px;top:628px"><svg width="13" height="13" viewBox="0 0 13 13"><rect x="0.5" y="0.5" width="12" height="12" fill="#f4f4f4" stroke="#8e8f8f"/><rect x="2" y="2" width="9" height="9" fill="#dfe3ea"/><path d="M3.2 6.6 L5.4 9.6 L9.8 2.6" fill="none" stroke="#4a5fa0" stroke-width="1.6"/></svg></div><div class="t" style="left:1008px;top:628px;">XhoI (<b>1/1</b>)</div><div style="position:absolute;left:1079px;top:630px"><svg width="12" height="9" viewBox="0 0 12 9"><rect x="0.5" y="0.5" width="11" height="8" fill="#f6f6f6" stroke="#505050"/><path d="M2.5 2.5 L9.5 2.5 L6 6Z" fill="#3a3a3a"/></svg></div>
<div style="position:absolute;left:957px;top:657px"><svg width="8" height="5"><path d="M0 0 L8 0 L4 4.5Z" fill="#111"/></svg></div><div style="position:absolute;left:977px;top:653px"><svg width="13" height="13" viewBox="0 0 13 13"><rect x="0.5" y="0.5" width="12" height="12" fill="#f4f4f4" stroke="#8e8f8f"/><rect x="2" y="2" width="9" height="9" fill="#dfe3ea"/><path d="M3.2 6.6 L5.4 9.6 L9.8 2.6" fill="none" stroke="#4a5fa0" stroke-width="1.6"/></svg></div><div class="t" style="left:993px;top:653px;">Double cutters</div>
<div style="position:absolute;left:965px;top:676px;width:23px;height:16px;box-sizing:border-box;border:1px solid #202020;background:#404040"></div><div style="position:absolute;left:992px;top:678px"><svg width="13" height="13" viewBox="0 0 13 13"><rect x="0.5" y="0.5" width="12" height="12" fill="#f4f4f4" stroke="#8e8f8f"/><rect x="2" y="2" width="9" height="9" fill="#dfe3ea"/><path d="M3.2 6.6 L5.4 9.6 L9.8 2.6" fill="none" stroke="#4a5fa0" stroke-width="1.6"/></svg></div><div class="t" style="left:1008px;top:678px;">BglII (<b>2/3</b>)</div><div style="position:absolute;left:1071px;top:680px"><svg width="12" height="9" viewBox="0 0 12 9"><rect x="0.5" y="0.5" width="11" height="8" fill="#f6f6f6" stroke="#505050"/><path d="M2.5 2.5 L9.5 2.5 L6 6Z" fill="#3a3a3a"/></svg></div>
<div style="position:absolute;left:965px;top:699px;width:23px;height:16px;box-sizing:border-box;border:1px solid #202020;background:#f7901e"></div><div style="position:absolute;left:992px;top:701px"><svg width="13" height="13" viewBox="0 0 13 13"><rect x="0.5" y="0.5" width="12" height="12" fill="#f4f4f4" stroke="#8e8f8f"/><rect x="2" y="2" width="9" height="9" fill="#dfe3ea"/><path d="M3.2 6.6 L5.4 9.6 L9.8 2.6" fill="none" stroke="#4a5fa0" stroke-width="1.6"/></svg></div><div class="t" style="left:1008px;top:701px;">SmaI (<b>2/3</b>)</div><div style="position:absolute;left:1072px;top:703px"><svg width="12" height="9" viewBox="0 0 12 9"><rect x="0.5" y="0.5" width="11" height="8" fill="#f6f6f6" stroke="#505050"/><path d="M2.5 2.5 L9.5 2.5 L6 6Z" fill="#3a3a3a"/></svg></div>
<div style="position:absolute;left:957px;top:730px"><svg width="8" height="5"><path d="M0 0 L8 0 L4 4.5Z" fill="#111"/></svg></div><div style="position:absolute;left:977px;top:726px"><svg width="13" height="13" viewBox="0 0 13 13"><rect x="0.5" y="0.5" width="12" height="12" fill="#f4f4f4" stroke="#8e8f8f"/><rect x="2" y="2" width="9" height="9" fill="#dfe3ea"/><path d="M3.2 6.6 L5.4 9.6 L9.8 2.6" fill="none" stroke="#4a5fa0" stroke-width="1.6"/></svg></div><div class="t" style="left:993px;top:726px;">Multiple cutters</div>
<div style="position:absolute;left:965px;top:749px;width:23px;height:16px;box-sizing:border-box;border:1px solid #202020;background:#c0c0c0"></div><div style="position:absolute;left:992px;top:751px"><svg width="13" height="13" viewBox="0 0 13 13"><rect x="0.5" y="0.5" width="12" height="12" fill="#f4f4f4" stroke="#8e8f8f"/><rect x="2" y="2" width="9" height="9" fill="#dfe3ea"/><path d="M3.2 6.6 L5.4 9.6 L9.8 2.6" fill="none" stroke="#4a5fa0" stroke-width="1.6"/></svg></div><div class="t" style="left:1008px;top:751px;">SalI (<b>3/3</b>)</div><div style="position:absolute;left:1066px;top:753px"><svg width="12" height="9" viewBox="0 0 12 9"><rect x="0.5" y="0.5" width="11" height="8" fill="#f6f6f6" stroke="#505050"/><path d="M2.5 2.5 L9.5 2.5 L6 6Z" fill="#3a3a3a"/></svg></div>
<div style="position:absolute;left:956px;top:771px;width:141px;height:7px;box-sizing:border-box;border:1px solid #707070;border-bottom:none;border-radius:3px 3px 0 0;background:#f2f2f2;overflow:hidden"><div class="tt" style="position:relative;top:1px;text-align:center">Select All</div></div>
<div style="position:absolute;left:878px;top:778px;width:284px;height:19px;background:#f0f0f0"></div>
<div style="position:absolute;left:877px;top:778px;width:1px;height:19px;background:#8a8a8a"></div>
<div style="position:absolute;left:873px;top:605px;width:1px;height:192px;background:#fafafa"></div>
<svg style="position:absolute;left:880px;top:783px" width="60" height="12"><rect x="0.5" y="3.5" width="10" height="2" fill="none" stroke="#8a8a8a"/><path d="M17.5 1.5H21.5L22.5 0.5H28.5V10.5H17.5Z" fill="#f4f4f4" stroke="#8a8a8a"/><path d="M34 3H40V9H34M38 6H42M40 4L42 6L40 8M44 1V11" stroke="#aaa" fill="none"/></svg>
<div class="t" style="left:1148px;top:782px;color:#9a9a9a;font-size:12px">?</div>
</body></html>
